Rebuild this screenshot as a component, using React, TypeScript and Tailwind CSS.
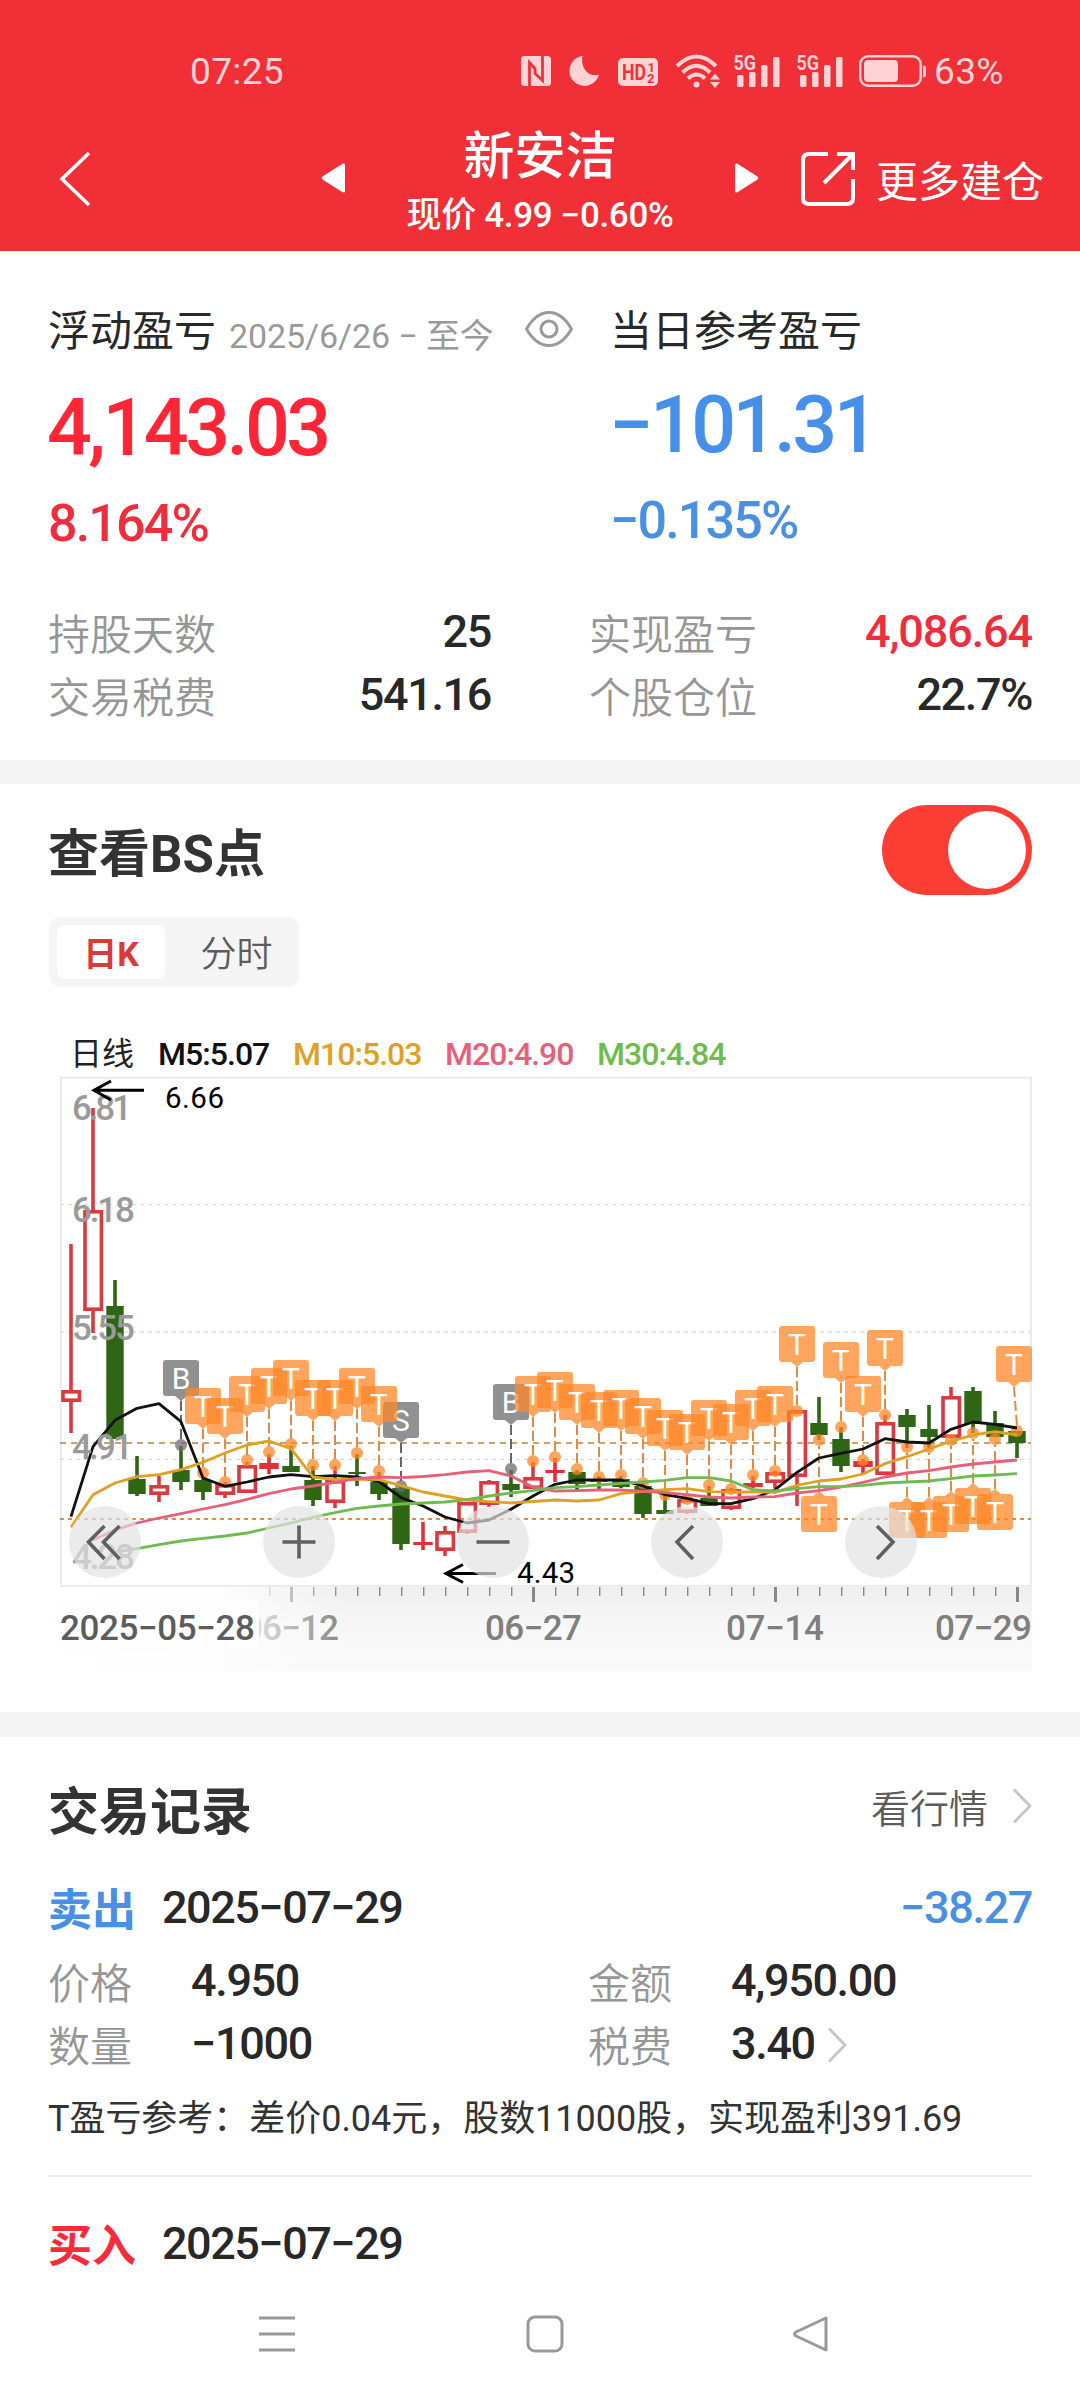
import React from "react";

const GREY = "#7f7f7f";
const RED = "#d93a3f";
const GREEN = "#2f6614";

const xAt = (i: number) => 71 + 22 * i;

// kind: r = hollow red, f = filled red, g = filled green
type Candle = ["r" | "f" | "g", number, number, number, number];
// [kind, wick top, body top, body bottom, wick bottom]
const candles: Candle[] = [
  ["r", 1244, 1390, 1402, 1433],
  ["r", 1108, 1210, 1311, 1333],
  ["g", 1280, 1306, 1439, 1439],
  ["g", 1456, 1479, 1494, 1496],
  ["r", 1476, 1485, 1495, 1502],
  ["g", 1446, 1470, 1482, 1490],
  ["g", 1477, 1480, 1492, 1500],
  ["r", 1482, 1484, 1495, 1498],
  ["r", 1462, 1465, 1493, 1493],
  ["f", 1454, 1463, 1469, 1474],
  ["g", 1446, 1466, 1472, 1472],
  ["g", 1466, 1480, 1500, 1506],
  ["r", 1466, 1480, 1503, 1508],
  ["g", 1454, 1472, 1474, 1486],
  ["g", 1472, 1482, 1494, 1500],
  ["g", 1486, 1488, 1544, 1550],
  ["f", 1522, 1542, 1545, 1550],
  ["r", 1526, 1531, 1551, 1556],
  ["r", 1502, 1502, 1533, 1534],
  ["r", 1480, 1481, 1505, 1507],
  ["g", 1470, 1484, 1490, 1497],
  ["r", 1462, 1477, 1489, 1489],
  ["f", 1458, 1470, 1473, 1482],
  ["g", 1470, 1472, 1484, 1491],
  ["g", 1476, 1479, 1482, 1491],
  ["g", 1476, 1479, 1487, 1488],
  ["g", 1483, 1486, 1514, 1518],
  ["g", 1494, 1510, 1514, 1514],
  ["r", 1498, 1499, 1513, 1514],
  ["g", 1486, 1498, 1506, 1506],
  ["r", 1488, 1489, 1509, 1510],
  ["f", 1476, 1483, 1487, 1488],
  ["r", 1471, 1472, 1483, 1488],
  ["r", 1410, 1410, 1477, 1506],
  ["g", 1397, 1423, 1435, 1440],
  ["g", 1427, 1439, 1466, 1472],
  ["f", 1459, 1461, 1467, 1474],
  ["r", 1415, 1422, 1475, 1475],
  ["g", 1409, 1415, 1427, 1448],
  ["g", 1405, 1429, 1437, 1448],
  ["r", 1387, 1396, 1438, 1438],
  ["g", 1387, 1391, 1424, 1433],
  ["g", 1411, 1423, 1437, 1437],
  ["g", 1431, 1431, 1443, 1458],
];

// [candle index, box top, dot centre]
const above: [number, number, number][] = [
  [6, 1388, 1473], [7, 1398, 1482], [8, 1376, 1460], [9, 1368, 1452], [10, 1360, 1444],
  [11, 1380, 1465], [12, 1380, 1465], [13, 1368, 1453], [14, 1386, 1471],
  [21, 1376, 1461], [22, 1372, 1457], [23, 1384, 1469], [24, 1392, 1477], [25, 1390, 1475],
  [26, 1398, 1483], [27, 1410, 1495], [28, 1414, 1499], [29, 1400, 1485], [30, 1404, 1489],
  [31, 1390, 1475], [32, 1386, 1471], [33, 1326, 1411], [35, 1342, 1427], [36, 1376, 1460],
  [37, 1330, 1415], [43, 1346, 1431],
];
const below: [number, number, number][] = [
  [34, 1496, 1440], [38, 1502, 1447], [39, 1502, 1447], [40, 1496, 1440], [41, 1488, 1433], [42, 1494, 1439],
];
const markers: [string, number, number, number][] = [
  ["B", 5, 1360, 1445], ["S", 15, 1402, 1486], ["B", 20, 1384, 1469],
];

const m5 = [1516.7, 1446.7, 1420.3, 1408.3, 1403.7, 1421.7, 1478, 1486.3, 1482, 1477, 1474.7, 1476.7, 1475.7, 1477, 1481.7, 1497.5, 1506, 1517, 1523, 1520, 1509.3, 1496, 1484.3, 1480, 1480, 1480, 1486, 1494.7, 1498.3, 1503.7, 1503.7, 1498.7, 1489.7, 1472.3, 1458, 1453.3, 1449, 1438.7, 1442, 1443, 1429.3, 1422, 1424.3, 1428];
const m10 = [1527.3, 1494.7, 1483, 1476.7, 1474.7, 1469.7, 1462.3, 1453, 1445, 1441, 1448.7, 1477, 1479.7, 1479, 1479.7, 1485.7, 1492, 1496, 1500, 1501.7, 1503, 1501.5, 1500, 1501, 1500, 1493.7, 1491.3, 1489.7, 1488.7, 1491.7, 1492, 1492, 1492.3, 1485.3, 1481, 1479, 1474, 1463.7, 1456.7, 1449, 1441.3, 1435, 1431.7, 1435];
const m20 = [1540, 1530, 1523, 1518, 1513.7, 1509, 1504.7, 1499.3, 1493.7, 1489, 1486, 1482.3, 1478.7, 1477, 1477.7, 1476.5, 1474.7, 1472, 1470.7, 1476, 1487, 1491, 1490.7, 1490, 1490, 1491.3, 1492.7, 1494.7, 1497, 1498, 1497, 1496.7, 1493, 1490.7, 1487, 1482.3, 1477, 1473, 1470.7, 1467, 1464, 1462, 1460];
const m30 = [1552, 1548.7, 1544.7, 1541, 1538.3, 1536, 1533, 1528, 1523, 1517.3, 1512.7, 1508.3, 1506, 1504, 1503, 1502, 1499.7, 1496, 1493, 1490.7, 1487.7, 1486.7, 1485, 1483.3, 1482, 1480.3, 1477.7, 1477.7, 1481, 1489.7, 1491, 1488.7, 1486.7, 1486.7, 1485.3, 1483, 1482, 1481, 1478.7, 1476, 1475, 1473.7];
const line = (ys: number[], start: number) => ys.map((y, k) => `${xAt(start + k)},${y}`).join(" ");

function CandleShape({ c, i }: { c: Candle; i: number }) {
  const [kind, wt, bt, bb, wb] = c;
  const x = xAt(i);
  if (kind === "r") {
    return (
      <g stroke={RED} strokeWidth={3.6} fill="none">
        {bt > wt && <path d={`M${x} ${wt}V${bt + 1}`} />}
        {wb > bb && <path d={`M${x} ${bb - 1}V${wb}`} />}
        <rect x={x - 8} y={bt + 1.8} width={16.4} height={bb - bt - 3.6} />
      </g>
    );
  }
  const col = kind === "g" ? GREEN : "#e03236";
  const w = kind === "g" ? 17.4 : 19.5;
  return (
    <g fill={col}>
      <rect x={x - 1.8} y={wt} width={3.6} height={wb - wt} />
      <rect x={x - w / 2} y={bt} width={w} height={bb - bt} />
    </g>
  );
}

function Tag({ x, top, dot, letter, color, shade, up }: { x: number; top: number; dot: number; letter: string; color: string; shade: string; up?: boolean }) {
  const bx = Math.min(x, 1014);
  const tip = up ? top - 5 : top + 41;
  return (
    <g>
      <path d={`M${bx} ${tip}L${x} ${up ? dot + 6 : dot - 5}`} stroke={shade} strokeWidth={2} strokeDasharray="10 4" />
      <circle cx={x} cy={dot} r={6} fill={color} fillOpacity={0.75} />
      <path
        d={
          up
            ? `M${bx - 15} ${top}h9l6-5l6 5h9a3 3 0 0 1 3 3v30a3 3 0 0 1-3 3h-30a3 3 0 0 1-3-3v-30a3 3 0 0 1 3-3z`
            : `M${bx - 15} ${top}h30a3 3 0 0 1 3 3v30a3 3 0 0 1-3 3h-9l-6 5l-6-5h-9a3 3 0 0 1-3-3v-30a3 3 0 0 1 3-3z`
        }
        fill={color}
        fillOpacity={0.75}
      />
      <text x={bx} y={top + 28.5} textAnchor="middle" fontSize={30} fill="#fff">{letter}</text>
    </g>
  );
}

function RoundButton({ cx, d }: { cx: number; d: string }) {
  return (
    <g>
      <circle cx={cx} cy={1542} r={36} fill="#e2e2e2" fillOpacity={0.69} />
      <path d={d} stroke="#606060" strokeWidth={3.6} fill="none" />
    </g>
  );
}

function Chart() {
  return (
    <svg className="block h-[598px] w-[1080px]" viewBox="0 1074 1080 598">
      <defs>
        <linearGradient id="band" x1="0" y1="0" x2="0" y2="1">
          <stop offset="0" stopColor="#efefef" />
          <stop offset="0.45" stopColor="#f7f7f7" />
          <stop offset="1" stopColor="#fafafa" />
        </linearGradient>
        <linearGradient id="fade" x1="0" y1="0" x2="1" y2="0">
          <stop offset="0" stopColor="#fff" />
          <stop offset="0.55" stopColor="#fdfdfd" />
          <stop offset="0.64" stopColor="#fcfcfc" stopOpacity="0.85" />
          <stop offset="1" stopColor="#fafafa" stopOpacity="0" />
        </linearGradient>
      </defs>

      <path d="M61 1077.8H1031V1586H61Z" fill="none" stroke="#ebebeb" strokeWidth={2} />
      <path d="M60 1204.5H1031M60 1459.3H1031" stroke="#dcdcdc" strokeWidth={1.2} strokeDasharray="4 4" />
      <path d="M60 1332H1031" stroke="#e6e6e6" strokeWidth={2} strokeDasharray="4 4" />
      <path d="M60 1443H1031" stroke="#cc9f6d" strokeWidth={2} strokeDasharray="6 5" />
      <path d="M60 1519H1031" stroke="#e08a45" strokeWidth={2} strokeDasharray="4 4" />

      <g fontFamily="Roboto">
        {candles.map((c, i) => <CandleShape key={i} c={c} i={i} />)}
        {markers.map(([l, i, t, d]) => (
          <Tag key={i} x={xAt(i)} top={t} dot={d} letter={l} color="#6c6c6c" shade="#666" />
        ))}
        {above.map(([i, t, d]) => (
          <Tag key={i} x={xAt(i)} top={t} dot={d} letter="T" color="#ff8727" shade="#e28a42" />
        ))}
        {below.map(([i, t, d]) => (
          <Tag key={i} x={xAt(i)} top={t} dot={d} letter="T" color="#ff8727" shade="#e28a42" up />
        ))}
      </g>

      <g fill="none" strokeWidth={2.8} strokeLinejoin="round">
        <polyline points={line(m5, 0)} stroke="#111" />
        <polyline points={line(m10, 0)} stroke="#dfa025" />
        <polyline points={line(m20, 1)} stroke="#e6607a" />
        <polyline points={line(m30, 2)} stroke="#6fbb51" />
      </g>

      <g fontFamily="Roboto" fontWeight={500} fontSize={35} fill="#9a9a9a">
        <text x={72} y={1120} textLength={60}>6.81</text>
        <text x={72} y={1222} textLength={63}>6.18</text>
        <text x={72} y={1340} textLength={63}>5.55</text>
        <text x={72} y={1459} textLength={61}>4.91</text>
        <text x={72} y={1569} textLength={63}>4.28</text>
      </g>

      <g fontFamily="Roboto" fontSize={29.5} fill="#000">
        <text x={165} y={1108} textLength={59}>6.66</text>
        <text x={517} y={1582.5} textLength={58}>4.43</text>
      </g>
      <g fill="none" stroke="#000" strokeWidth={3}>
        <path d="M144 1090.3H95M111 1081L94 1090.3L111 1100" />
        <path d="M496 1573.5H447M463 1564.5L446 1573.5L463 1582.5" />
      </g>

      <RoundButton cx={105} d="M104.5 1526L88.5 1542L104.5 1559M119.5 1526L103.5 1542L119.5 1559" />
      <RoundButton cx={299} d="M282.5 1542H315.5M299 1525.5V1558.5" />
      <RoundButton cx={493} d="M476.5 1542H509.5" />
      <RoundButton cx={687} d="M693 1526L677 1542L693 1559" />
      <RoundButton cx={881} d="M877 1526L893 1542L877 1559" />

      <rect x={61} y={1586} width={971} height={85} fill="url(#band)" />
      {Array.from({ length: 35 }, (_, k) => {
        const i = k + 9;
        const major = (i - 10) % 11 === 0;
        return (
          <rect
            key={i}
            x={xAt(i) - (major ? 1 : 0)}
            y={1587}
            width={major ? 3 : 1.4}
            height={major ? 15 : 9}
            fill="#888"
          />
        );
      })}
      <g fontFamily="Roboto" fontWeight={500} fontSize={35} fill={GREY}>
        <text x={243} y={1639.5} textLength={96}>06−12</text>
        <text x={485} y={1639.5} textLength={97}>06−27</text>
        <text x={726} y={1639.5} textLength={98}>07−14</text>
        <text x={935} y={1639.5} textLength={97}>07−29</text>
      </g>
      <rect x={60} y={1587} width={290} height={85} fill="url(#fade)" />
      <rect x={60} y={1600} width={199} height={50} fill="#fdfdfd" />
      <text x={60} y={1639.5} textLength={195} fontFamily="Roboto" fontWeight={500} fontSize={35} fill="#5c5c5c">2025−05−28</text>
    </svg>
  );
}

function Signal({ className }: { className: string }) {
  return (
    <svg className={`shrink-0 ${className}`} width="48" height="50" viewBox="733 45 48 50" fill="currentColor">
      <text x="733.5" y="69" fontFamily="Roboto" fontWeight="700" fontSize="19.500" textLength="22.500" lengthAdjust="spacingAndGlyphs">5G</text>
      <rect x="737" y="74" width="6.5" height="12" rx="1.5" />
      <rect x="749" y="71" width="6.5" height="15" rx="1.5" />
      <rect x="761" y="64" width="6.5" height="22" rx="1.5" />
      <rect x="773" y="56" width="6.5" height="30" rx="1.5" />
    </svg>
  );
}

function StatusBar() {
  return (
    <div className="flex h-[142px] items-center text-[#ffd3d5]">
      <span className="ml-[190px] w-[96px] text-[37px] tracking-[0.01em]">07:25</span>
      <svg className="ml-[235px]" width="30" height="30" viewBox="0 0 30 30">
        <rect width="30" height="30" rx="3.5" fill="currentColor" />
        <path d="M8.500 25V6L22 25.500V0M8.500 6L13.500 11" stroke="#e8343b" strokeWidth="0" fill="none" />
        <path d="M8.500 30V6.500L14 12.500V17.500L21.500 24.500V0" stroke="#e8343b" strokeWidth="2.800" fill="none" />
      </svg>
      <svg className="ml-[18px]" width="30" height="30" viewBox="0 0 30 30">
        <path d="M13.500 0A15 15 0 1 0 30 18.500C22 22 11 14 13.500 0Z" fill="currentColor" />
      </svg>
      <svg className="ml-[19px] mt-[2px]" width="40" height="28" viewBox="0 0 40 28">
        <rect width="40" height="28" rx="5" fill="currentColor" />
        <g fill="#e8343b" fontFamily="Roboto" fontWeight="700">
          <text x="4" y="22" fontSize="22" textLength="24" lengthAdjust="spacingAndGlyphs">HD</text>
          <text x="29.5" y="13.5" fontSize="13">1</text>
          <text x="29" y="25" fontSize="13">2</text>
        </g>
      </svg>
      <svg className="ml-[17px]" width="46" height="36" viewBox="675 52 46 36" fill="none" stroke="currentColor" strokeWidth="4">
        <path d="M677 65Q696.500 46 716 65M682.500 71.500Q696.500 58 710 71.500M688 77.500Q696.500 69.500 705 77.500" />
        <circle cx="696.5" cy="83.5" r="3" fill="currentColor" stroke="none" />
        <path d="M710 78.500L715 72.500L720 78.500ZM710 81L715 87L720 81Z" fill="currentColor" stroke="none" />
      </svg>
      <Signal className="ml-[12px] mt-[-1px]" />
      <Signal className="ml-[15px] mt-[-1px]" />
      <svg className="ml-[15px]" width="68" height="32" viewBox="0 0 68 32">
        <rect x="1.2" y="1.2" width="60.5" height="29.5" rx="8" fill="none" stroke="currentColor" strokeWidth="2.4" />
        <rect x="5" y="5" width="34" height="22" rx="4" fill="currentColor" />
        <path d="M64 10.500q3 0 3 3v6q0 3-3 3z" fill="currentColor" />
      </svg>
      <span className="ml-[7px] text-[37px] tracking-[0.01em]">63%</span>
    </div>
  );
}

function Header() {
  return (
    <header className="h-[251px] shrink-0 bg-[#f12f37] text-white">
      <StatusBar />
      <div className="-mt-[18px] flex h-[110px] items-center">
        <svg className="ml-[58px]" width="34" height="56" viewBox="0 0 34 56" fill="none" stroke="currentColor" strokeWidth="3.6">
          <path d="M31 2L4 28L31 54" />
        </svg>
        <svg className="ml-[229px] mb-[3px]" width="24" height="30" viewBox="0 0 24 30" fill="currentColor">
          <path d="M22 .5L1.500 13.500Q0 15 1.500 16.500L22 29.500Q24 30 24 28V2Q24 0 22 .5Z" />
        </svg>
        <div className="flex w-[390px] flex-col items-center">
          <span className="mt-[5px] h-[58px] text-[51px] leading-[60px] font-medium">新安洁</span>
          <span className="h-[52px] pt-[3px] text-[35px] leading-[56px] font-medium tracking-[-0.01em] whitespace-nowrap">现价 4.99 −0.60%</span>
        </div>
        <svg className="mb-[3px]" width="24" height="30" viewBox="0 0 24 30" fill="currentColor">
          <path d="M2 .5L22.500 13.500Q24 15 22.500 16.500L2 29.500Q0 30 0 28V2Q0 0 2 .5Z" />
        </svg>
        <svg className="ml-[42px]" width="54" height="54" viewBox="0 0 54 54" fill="none" stroke="currentColor" strokeWidth="4">
          <path d="M27 2H8Q2 2 2 8V46Q2 52 8 52H46Q52 52 52 46V27M36 2H52V18M51 3L23 31" />
        </svg>
        <span className="ml-[21px] mt-[8px] text-[42px] whitespace-nowrap">更多建仓</span>
      </div>
    </header>
  );
}

function Stat({ label, value, red }: { label: string; value: string; red?: boolean }) {
  return (
    <div className="flex h-[63px] items-center justify-between">
      <span className="text-[42px] font-[350] text-[#969696]">{label}</span>
      <span className={`mb-[9px] text-[45px] font-medium ${red ? "tracking-[-0.025em] text-[#ed2f3d]" : "tracking-[-0.03em] text-[#282828]"}`}>{value}</span>
    </div>
  );
}

function Summary() {
  return (
    <section className="h-[509px] shrink-0 pt-[50px]">
      <div className="flex h-[62px] items-center text-[#282828]">
        <span className="ml-[48px] text-[42px]">浮动盈亏</span>
        <span className="ml-[13px] mt-[7px] w-[296px] text-[34px] tracking-[-0.003em] whitespace-nowrap text-[#999]">2025/6/26 − 至今</span>
        <svg className="mb-[6px]" width="48" height="36" viewBox="0 0 48 36" fill="none" stroke="#9a9a9a" strokeWidth="3">
          <path d="M1.500 18Q11 1.500 24 1.500T46.500 18Q37 34.500 24 34.500T1.500 18Z" />
          <circle cx="24" cy="18" r="8" />
        </svg>
        <span className="ml-[37px] text-[42px]">当日参考盈亏</span>
      </div>
      <div className="mt-[25px] flex h-[80px] items-center text-[79px] font-medium tracking-[-0.045em]">
        <span className="ml-[47px] w-[562px] text-[#ff2637]">4,143.03</span>
        <span className="mb-[6px] text-[#4790e9]">−101.31</span>
      </div>
      <div className="mt-[26px] flex h-[60px] items-center text-[52px] font-medium tracking-[-0.035em]">
        <span className="ml-[48px] w-[562px] text-[#ed2f3d]">8.164%</span>
        <span className="mb-[6px] text-[#4a90e2]">−0.135%</span>
      </div>
      <div className="mt-[50px] flex justify-between px-[48px]">
        <div className="w-[443px]">
          <Stat label="持股天数" value="25" />
          <Stat label="交易税费" value="541.16" />
        </div>
        <div className="w-[443px]">
          <Stat label="实现盈亏" value="4,086.64" red />
          <Stat label="个股仓位" value="22.7%" />
        </div>
      </div>
    </section>
  );
}

function BsSection() {
  return (
    <section className="h-[928px] shrink-0 pt-[21px]">
      <div className="flex h-[90px] items-center justify-between px-[48px]">
        <h2 className="mt-[8px] text-[51px] font-bold text-[#333]">查看BS点</h2>
        <div className="flex h-[90px] w-[150px] items-center justify-end rounded-full bg-[#fc3d33] pr-[6px]">
          <div className="size-[78px] rounded-full bg-white" />
        </div>
      </div>
      <div className="mt-[22px] ml-[49px] flex h-[70px] w-[250px] items-center rounded-xl bg-[#f5f5f5] px-2">
        <div className="flex h-[54px] w-[108px] items-center justify-center rounded-lg bg-white pt-[4px] text-[34px] font-bold text-[#d93a3a]">日K</div>
        <div className="flex flex-1 items-center justify-center pt-[5px] pl-[17px] text-[36px] font-[350] text-[#5c5c5c]">分时</div>
      </div>
      <div className="mt-[47px] flex h-[40px] items-center text-[32px] font-medium tracking-[-0.03em] whitespace-nowrap">
        <span className="ml-[70px] w-[88px] font-normal tracking-normal text-[#222]">日线</span>
        <span className="w-[135px] text-[#111]">M5:5.07</span>
        <span className="w-[152px] text-[#dfa025]">M10:5.03</span>
        <span className="w-[152px] text-[#e6607a]">M20:4.90</span>
        <span className="text-[#6dbd4b]">M30:4.84</span>
      </div>
      <Chart />
    </section>
  );
}

function Chevron({ className }: { className: string }) {
  return (
    <svg className={className} width="20" height="36" viewBox="0 0 20 36" fill="none" stroke="#c6c6c6" strokeWidth="3">
      <path d="M2 1.500L18 18L2 34.500" />
    </svg>
  );
}

function TradeHead({ kind, date, amount }: { kind: "卖出" | "买入"; date: string; amount?: string }) {
  return (
    <div className="flex h-[60px] items-center">
      <span className={`w-[114px] text-[44px] font-bold ${kind === "卖出" ? "text-[#4790e6]" : "text-[#f82b3b]"}`}>{kind}</span>
      <span className="mb-[8px] text-[45px] font-medium tracking-[-0.033em] text-[#282828]">{date}</span>
      {amount && <span className="mb-[8px] ml-auto text-[45px] font-medium tracking-[-0.03em] text-[#4a90e2]">{amount}</span>}
    </div>
  );
}

function Field({ label, value, link }: { label: string; value: string; link?: boolean }) {
  return (
    <div className="flex h-[63px] items-center">
      <span className="w-[143px] text-[42px] font-[350] text-[#969696]">{label}</span>
      <span className="mb-[9px] text-[45px] font-medium tracking-[-0.03em] text-[#282828]">{value}</span>
      {link && <Chevron className="mb-[5px] ml-[12px]" />}
    </div>
  );
}

function Records() {
  return (
    <section className="shrink-0 px-[48px] pt-[45px]">
      <div className="flex h-[60px] items-center">
        <h2 className="text-[51px] font-bold text-[#333]">交易记录</h2>
        <span className="mr-[24px] mb-[4px] ml-auto text-[39px] font-[350] text-[#5c5c5c]">看行情</span>
        <Chevron className="mb-[12px]" />
      </div>
      <div className="mt-[39px]">
        <TradeHead kind="卖出" date="2025−07−29" amount="−38.27" />
      </div>
      <div className="mt-[12px] grid grid-cols-[540px_1fr]">
        <Field label="价格" value="4.950" />
        <Field label="金额" value="4,950.00" />
        <Field label="数量" value="−1000" />
        <Field label="税费" value="3.40" link />
      </div>
      <p className="mt-[15px] h-[50px] text-[36px] leading-[50px] tracking-[-0.001em] whitespace-nowrap text-[#333]">
        T盈亏参考：差价0.04元，股数11000股，实现盈利391.69
      </p>
      <div className="mt-[31px] h-[2px] bg-[#ececec]" />
      <div className="mt-[40px]">
        <TradeHead kind="买入" date="2025−07−29" />
      </div>
    </section>
  );
}

function NavBar() {
  return (
    <nav className="flex h-[114px] shrink-0 items-center pl-[258px]">
      <svg width="38" height="38" viewBox="0 0 38 38" stroke="#999" strokeWidth="3">
        <path d="M1 3H37M1 19H37M1 35H37" />
      </svg>
      <svg className="ml-[230px]" width="38" height="38" viewBox="0 0 38 38" fill="none" stroke="#999" strokeWidth="3">
        <rect x="2" y="2" width="34" height="34" rx="7" />
      </svg>
      <svg className="ml-[228px]" width="38" height="38" viewBox="0 0 38 38" fill="none" stroke="#999" strokeWidth="3" strokeLinejoin="round">
        <path d="M34 3V35L4 21Q1 19 4 17Z" />
      </svg>
    </nav>
  );
}

export default function App() {
  return (
    <div className="flex h-[2400px] w-[1080px] flex-col overflow-hidden bg-white font-['Roboto','Noto_Sans_CJK_SC',sans-serif] leading-none">
      <Header />
      <Summary />
      <div className="h-[24px] shrink-0 bg-[#f4f4f4]" />
      <BsSection />
      <div className="h-[25px] shrink-0 bg-[#f4f4f4]" />
      <Records />
      <NavBar />
    </div>
  );
}
